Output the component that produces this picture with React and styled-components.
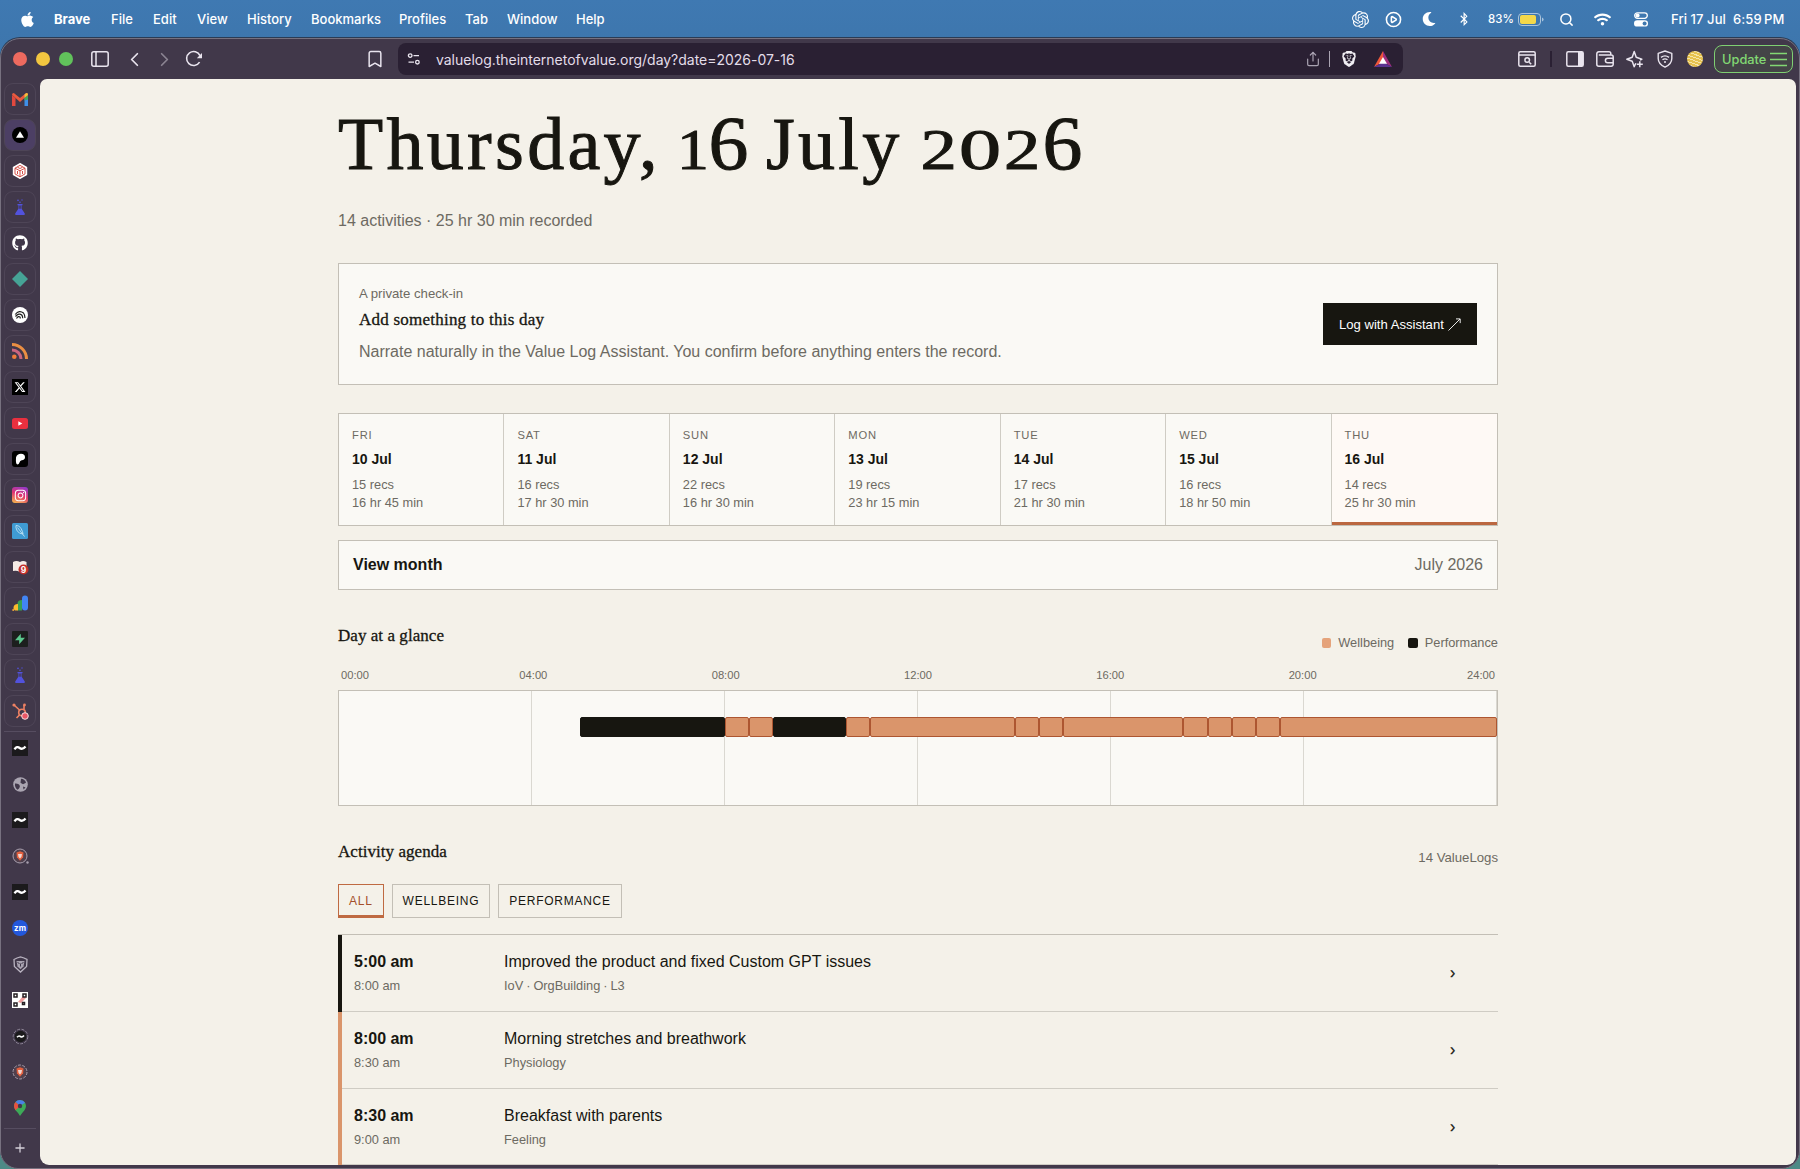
import React, { useState } from "react";
import styled, { createGlobalStyle } from "styled-components";
import {
  Bookmark,
  ChevronLeft,
  ChevronRight,
  CirclePlay,
  Plus,
  Search,
  Share
} from "lucide-react";
import {
  FaApple,
  FaBluetoothB,
  FaGithub,
  FaInstagram,
  FaMoon,
  FaWifi
} from "react-icons/fa";
import { FaXTwitter } from "react-icons/fa6";
import { SiBrave, SiOpenai } from "react-icons/si";

const SANS = `"Liberation Sans", Arial, sans-serif`;
const SERIF = `"Liberation Serif", "Times New Roman", serif`;
const SYSTEM = `Inter, "Liberation Sans", sans-serif`;

const menus = [
  ["Brave", 57],
  ["File", 42],
  ["Edit", 44],
  ["View", 50],
  ["History", 64],
  ["Bookmarks", 88],
  ["Profiles", 66],
  ["Tab", 42],
  ["Window", 69],
  ["Help", 40]
];

const week = [
  { name: "Fri", date: "10 Jul", recs: 15, total: "16 hr 45 min" },
  { name: "Sat", date: "11 Jul", recs: 16, total: "17 hr 30 min" },
  { name: "Sun", date: "12 Jul", recs: 22, total: "16 hr 30 min" },
  { name: "Mon", date: "13 Jul", recs: 19, total: "23 hr 15 min" },
  { name: "Tue", date: "14 Jul", recs: 17, total: "21 hr 30 min" },
  { name: "Wed", date: "15 Jul", recs: 16, total: "18 hr 50 min" },
  { name: "Thu", date: "16 Jul", recs: 14, total: "25 hr 30 min" }
];

const hours = ["00:00", "04:00", "08:00", "12:00", "16:00", "20:00", "24:00"];

// [kind, start hour, end hour]
const blocks = [
  ["performance", 5, 8],
  ["wellbeing", 8, 8.5],
  ["wellbeing", 8.5, 9],
  ["performance", 9, 10.5],
  ["wellbeing", 10.5, 11],
  ["wellbeing", 11, 14],
  ["wellbeing", 14, 14.5],
  ["wellbeing", 14.5, 15],
  ["wellbeing", 15, 17.5],
  ["wellbeing", 17.5, 18],
  ["wellbeing", 18, 18.5],
  ["wellbeing", 18.5, 19],
  ["wellbeing", 19, 19.5],
  ["wellbeing", 19.5, 24]
];

const agenda = [
  {
    kind: "performance",
    start: "5:00 am",
    end: "8:00 am",
    title: "Improved the product and fixed Custom GPT issues",
    tags: "IoV · OrgBuilding · L3"
  },
  {
    kind: "wellbeing",
    start: "8:00 am",
    end: "8:30 am",
    title: "Morning stretches and breathwork",
    tags: "Physiology"
  },
  {
    kind: "wellbeing",
    start: "8:30 am",
    end: "9:00 am",
    title: "Breakfast with parents",
    tags: "Feeling"
  }
];

const firstHour = blocks[0][1];

const GlobalStyle = createGlobalStyle`
  * {
    box-sizing: border-box;
  }
  body {
    margin: 0;
    overflow: hidden;
    font-family: ${SANS};
    color: #171610;
  }
  h1, h2, p {
    margin: 0;
    font-weight: 400;
  }
  svg {
    display: block;
    flex: none;
  }
  button {
    font: inherit;
    color: inherit;
    background: none;
    border: 0;
    padding: 0;
  }
`;

const Desktop = styled.div`
  width: 1800px;
  height: 1169px;
  display: flex;
  flex-direction: column;
  overflow: hidden;
  background: linear-gradient(#3f79b2 0, #3d75ab 60px, #4d8a86 900px);
`;

const MenuBar = styled.header`
  display: flex;
  align-items: center;
  flex: none;
  height: 38px;
  padding-left: 19px;
  color: #fff;
  font: 500 13px ${SYSTEM};
`;

const Menu = styled.span`
  width: ${props => props.$w}px;
  font-weight: ${props => (props.$bold ? 700 : 500)};
`;

const AppleSlot = styled.span`
  width: 35px;
`;

const Status = styled.div`
  display: flex;
  align-items: center;
  margin-left: auto;
  width: 455px;
`;

const Slot = styled.span`
  display: flex;
  align-items: center;
  justify-content: center;
  flex: none;
  width: ${props => props.$w || 30}px;
  color: ${props => props.$color || "inherit"};
`;

const Battery = styled.span`
  display: flex;
  align-items: center;
  gap: 4px;
  width: 66px;
  padding-left: 6px;
  font-size: 11.5px;
`;

const Clock = styled.span`
  padding-left: 9px;
  font-size: 13px;
  letter-spacing: 0.08px;
  white-space: pre;
`;

const Window = styled.div`
  flex: 1;
  min-height: 0;
  display: flex;
  flex-direction: column;
  padding: 0 3px 3px 0;
  border: 1px solid #77717f;
  border-radius: 20px 20px 18px 18px;
  box-shadow: 0 -1px 0 #2b3c55;
  background: #41384a;
  overflow: hidden;
`;

const Toolbar = styled.div`
  display: flex;
  align-items: center;
  flex: none;
  height: 40px;
  padding-left: 12px;
  margin-right: -3px;
  color: #e9e4ee;
`;

const Lights = styled.div`
  display: flex;
  gap: 9px;
  width: 70px;
`;

const Light = styled.span`
  width: 14px;
  height: 14px;
  border-radius: 50%;
  background: ${props => props.$color};
`;

const BookmarkSlot = styled(Slot)`
  margin-left: 141px;
`;

const AddressBar = styled.div`
  display: flex;
  align-items: center;
  width: 1005px;
  height: 32px;
  border-radius: 8px;
  background: #2a2033;
`;

const Url = styled.span`
  flex: 1;
  padding-left: 6px;
  font: 400 14px ${SYSTEM};
  letter-spacing: -0.02px;
  color: #e3dde9;
`;

const Divider = styled.span`
  width: ${props => props.$thick || 1}px;
  height: 16px;
  background: ${props => props.$color};
`;

const Tools = styled.div`
  display: flex;
  align-items: center;
  margin-left: 109px;
`;

const Avatar = styled.span`
  width: 16px;
  height: 16px;
  border-radius: 50%;
  background: repeating-linear-gradient(
    20deg,
    #e6c24e 0,
    #e6c24e 2px,
    #f6e6a8 2px,
    #f6e6a8 3px
  );
`;

const Update = styled.button`
  display: flex;
  align-items: center;
  gap: 4px;
  width: 79px;
  height: 28px;
  margin-left: 4px;
  padding-left: 7px;
  border: 1px solid #7fcf72;
  border-radius: 8px;
  background: #444447;
  color: #82d873;
  font: 500 12.8px ${SYSTEM};
`;

const Body = styled.div`
  flex: 1;
  min-height: 0;
  display: flex;
`;

const Tabs = styled.nav`
  flex: none;
  display: flex;
  flex-direction: column;
  align-items: center;
  gap: 4px;
  width: 39px;
  padding: 4px 1px 0 0;
`;

const Tab = styled.span`
  display: flex;
  align-items: center;
  justify-content: center;
  flex: none;
  width: 32px;
  height: 32px;
  border: 1px solid ${props => (props.$pinned ? "#4e4557" : "transparent")};
  border-radius: 9px;
  background: ${props => (props.$active ? "#4c3f64" : "transparent")};
`;

const TabLine = styled.span`
  flex: none;
  width: 32px;
  height: 1px;
  margin: ${props => props.$margin};
  background: #564d60;
`;

const Page = styled.main`
  flex: 1;
  min-width: 0;
  padding: 24px 298px 0;
  border-radius: 7px 7px 9px 9px;
  background: #f4f1e9;
  overflow: hidden;
`;

const Title = styled.h1`
  height: 82px;
  font-family: ${SERIF};
  font-size: 74px;
  line-height: 82px;
  letter-spacing: 3.3px;
  word-spacing: -4.8px;
  white-space: nowrap;
  -webkit-text-stroke: 1px #171610;
`;

// Old-style numerals: 0, 1 and 2 stay low, 6 rises above them.
const Numeral = styled.span`
  display: inline-flex;
  justify-content: center;
  width: ${props => props.$w}px;
  font-size: ${props => (props.$tall ? 76 : 58)}px;
  line-height: 1;
  letter-spacing: 0;
  transform: scaleX(${props => (props.$tall ? 1.05 : props.$stretch)});
`;

const Summary = styled.p`
  margin-top: 26px;
  font-size: 16px;
  line-height: 20px;
  color: #6d6a62;
`;

const CheckIn = styled.section`
  display: flex;
  align-items: center;
  justify-content: space-between;
  height: 122px;
  margin-top: 32px;
  padding: 0 20px;
  border: 1px solid #c3bfb6;
  background: #faf9f5;
`;

const Kicker = styled.p`
  font-size: 13.2px;
  line-height: 16px;
  color: #6d6a62;
`;

const Heading = styled.h2`
  font: 400 17px/20px ${SERIF};
  letter-spacing: ${props => props.$spacing || 0.05}px;
  -webkit-text-stroke: 0.3px #171610;
`;

const CheckInHeading = styled(Heading)`
  margin: 8px 0 12px;
`;

const Hint = styled.p`
  font-size: 16px;
  line-height: 20px;
  color: #6d6a62;
`;

const LogButton = styled.button`
  display: flex;
  align-items: center;
  gap: 4px;
  width: 154px;
  height: 42px;
  padding-left: 16px;
  background: #171610;
  color: #fff;
  font-size: 13.1px;
  white-space: nowrap;
`;

const Week = styled.div`
  display: grid;
  grid-template-columns: repeat(7, 1fr);
  height: 113px;
  margin-top: 28px;
  border: 1px solid #c3bfb6;
  background: #faf9f5;
`;

const Day = styled.div`
  padding: 14px 0 0 13px;
  border-right: 1px solid #cfccc4;
  font-size: 12.8px;
  line-height: 18.4px;
  color: #6d6a62;

  &:last-child {
    border-right: 0;
    background: #fef9f5;
    box-shadow: inset 0 -3px 0 #bb6740;
  }
`;

const DayName = styled.div`
  font-size: 11.2px;
  line-height: 14px;
  letter-spacing: 0.8px;
  text-transform: uppercase;
`;

const DayDate = styled.div`
  margin: 8px 0;
  font-size: 14px;
  font-weight: 700;
  line-height: 18px;
  color: #171610;
`;

const MonthToggle = styled.div`
  display: flex;
  align-items: center;
  justify-content: space-between;
  height: 50px;
  margin-top: 14px;
  padding: 0 14px;
  border: 1px solid #c3bfb6;
  background: #faf9f5;
  font-size: 16px;
  line-height: 20px;

  span {
    color: #6d6a62;
  }
`;

const SectionHead = styled.div`
  display: flex;
  justify-content: space-between;
  height: 26px;
  margin: 36px 0 16px;
`;

const Legend = styled.div`
  display: flex;
  align-items: center;
  align-self: flex-end;
  gap: 14px;
  font-size: 12.8px;
  line-height: 18px;
  color: #6d6a62;
`;

const LegendItem = styled.span`
  display: flex;
  align-items: center;
  gap: 7px;

  &::before {
    content: "";
    width: 9.5px;
    height: 9.5px;
    border-radius: 2px;
    background: ${props => props.$color};
  }
`;

const Count = styled.span`
  align-self: flex-end;
  font-size: 13.2px;
  line-height: 20px;
  color: #6d6a62;
`;

const Axis = styled.div`
  display: flex;
  justify-content: space-between;
  padding: 0 3px;
  font-size: 11.2px;
  line-height: 14px;
  color: #6d6a62;
`;

const Tick = styled.span`
  display: flex;
  justify-content: center;
  width: 0;

  &:first-child {
    justify-content: flex-start;
  }
  &:last-child {
    justify-content: flex-end;
  }
`;

const Track = styled.div`
  display: grid;
  grid-template-columns: repeat(6, 1fr);
  height: 116px;
  margin-top: 8px;
  border: 1px solid #c3bfb6;
  background: #faf9f5;
`;

const TrackCell = styled.div`
  grid-row: 1;
  border-right: 1px solid #dad8d1;
`;

const Blocks = styled.div`
  display: flex;
  grid-row: 1;
  grid-column: 1 / -1;
  height: 20px;
  margin-top: 26px;
`;

const Block = styled.span`
  flex: none;
  border: 1px solid ${props => (props.$kind === "wellbeing" ? "#ad5631" : "#171610")};
  border-radius: 2px;
  background: ${props => (props.$kind === "wellbeing" ? "#da956b" : "#171610")};
`;

const Filters = styled.div`
  display: flex;
  gap: 8px;
`;

const Filter = styled.button`
  height: 34px;
  padding: 0 10px;
  border: 1px solid ${props => (props.$active ? "#bf6a42" : "#c3bfb6")};
  box-shadow: ${props => (props.$active ? "inset 0 -2px 0 #bf6a42" : "none")};
  color: ${props => (props.$active ? "#a34f2b" : "#171610")};
  font-size: 12px;
  letter-spacing: 0.74px;
  text-transform: uppercase;
`;

const Agenda = styled.div`
  margin-top: 16px;
  border-top: 1px solid #c3bfb6;
`;

const Entry = styled.div`
  display: grid;
  grid-template-columns: 150px 1fr 48px;
  height: 76.8px;
  padding: 17.4px 0 0 12px;
  border-left: 4px solid ${props => (props.$kind === "wellbeing" ? "#da956b" : "#171610")};
  box-shadow: inset 0 -1px 0 #cfccc4;
  font-size: 16px;
  line-height: 20px;
`;

const Sub = styled.div`
  margin-top: 5px;
  font-size: 12.8px;
  line-height: 18px;
  color: #6d6a62;
`;

const Tags = styled(Sub)`
  word-spacing: -0.6px;
`;

const Chevron = styled.span`
  padding-top: 11px;
  font-size: 16px;
  -webkit-text-stroke: 0.3px #171610;
`;

const BatteryIcon = () => (
  <svg width="26" height="13" viewBox="0 0 26 13">
    <rect x="0.5" y="0.5" width="22" height="12" rx="3.5" fill="none" stroke="#a9c3dc" />
    <rect x="2" y="2" width="16" height="9" rx="2" fill="#f4d84a" />
    <path d="M24 4.5v4q1.6-.6 1.6-2t-1.6-2z" fill="#a9c3dc" />
  </svg>
);

const ControlIcon = () => (
  <svg width="14" height="15" viewBox="0 0 14 15">
    <rect x="0.7" y="0.9" width="12.6" height="5.4" rx="2.7" fill="none" stroke="#fff" strokeWidth="1.3" />
    <circle cx="3.6" cy="3.6" r="2" fill="#fff" />
    <rect x="0" y="8.2" width="14" height="6.4" rx="3.2" fill="#fff" />
    <circle cx="10.6" cy="11.4" r="2" fill="#3f78af" />
  </svg>
);

const SidebarIcon = () => (
  <svg width="18" height="16" viewBox="0 0 18 16" fill="none" stroke="currentColor" strokeWidth="1.5">
    <rect x="0.8" y="0.8" width="16.4" height="14.4" rx="2" />
    <path d="M5 1v14" />
  </svg>
);

const ReloadIcon = () => (
  <svg width="18" height="18" viewBox="0 0 18 18" fill="none" stroke="currentColor" strokeWidth="1.6">
    <path d="M14.6 12.2A7 7 0 1 1 15 5.6" />
    <path d="M17 3v5.2h-5.2z" fill="currentColor" stroke="none" />
  </svg>
);

const TuneIcon = () => (
  <svg width="14" height="14" viewBox="0 0 14 14" fill="none" stroke="currentColor" strokeWidth="1.3">
    <circle cx="3.2" cy="3.6" r="1.8" />
    <path d="M6.5 3.6H12M1.5 10.2H7" />
    <circle cx="10.4" cy="10.2" r="1.8" />
  </svg>
);

const BatIcon = () => (
  <svg width="18" height="16" viewBox="0 0 18 16">
    <path d="M9 0 0 16l9-5z" fill="#f0563a" />
    <path d="M9 0l9 16-9-5z" fill="#9e2e7c" />
    <path d="M0 16h18l-9-5z" fill="#5b3390" />
    <path d="M9 6l4 6.8H5z" fill="#fff" />
  </svg>
);

const FindWindowIcon = () => (
  <svg width="18" height="16" viewBox="0 0 18 16" fill="none" stroke="currentColor" strokeWidth="1.5">
    <rect x="0.8" y="0.8" width="16.4" height="14.4" rx="1.5" />
    <path d="M1 4h16M11.2 11.2l2 2" />
    <circle cx="9.2" cy="9" r="2.3" />
  </svg>
);

const PanelIcon = () => (
  <svg width="18" height="16" viewBox="0 0 18 16">
    <rect x="0.8" y="0.8" width="16.4" height="14.4" rx="1.5" fill="none" stroke="currentColor" strokeWidth="1.5" />
    <path d="M12 1h5v14h-5z" fill="currentColor" />
  </svg>
);

const WalletIcon = () => (
  <svg width="18" height="16" viewBox="0 0 18 16" fill="none" stroke="currentColor" strokeWidth="1.5">
    <path d="M14.8 4V2.6A1.8 1.8 0 0 0 13 .8H2.8a2 2 0 0 0-2 2v10.4a2 2 0 0 0 2 2h12.4a2 2 0 0 0 2-2V6a2 2 0 0 0-2-2H2.8" />
    <path d="M17 7.2h-5.3a2.3 2.3 0 0 0 0 4.6H17" />
  </svg>
);

const SparkleIcon = () => (
  <svg width="18" height="18" viewBox="0 0 18 18" fill="none" stroke="currentColor" strokeWidth="1.5" strokeLinejoin="round">
    <path d="M9.8 13.2 8.2 16.8 6.2 11.2.8 9.2l5.4-2L8.2 1.4l2 5.8 5.6 2-1.8.8" />
    <path d="M13.8 11.2v6M10.8 14.2h6" />
  </svg>
);

const VpnIcon = () => (
  <svg width="16" height="18" viewBox="0 0 16 18" fill="none" stroke="currentColor" strokeWidth="1.4" strokeLinejoin="round">
    <path d="M8 1l6.8 2.3v5.2q0 5.5-6.8 8.7Q1.2 14 1.2 8.5V3.3z" />
    <path d="M4 7.4q4-3 8 0M5.5 9.8q2.5-1.8 5 0" />
    <circle cx="8" cy="12" r="1" fill="currentColor" stroke="none" />
  </svg>
);

const BurgerIcon = () => (
  <svg width="17" height="15" viewBox="0 0 17 15" stroke="currentColor" strokeWidth="1.3">
    <path d="M0 1.5h17M0 7.5h17M0 13.5h17" />
  </svg>
);

const ArrowIcon = () => (
  <svg width="13" height="13" viewBox="0 0 13 13" fill="none" stroke="#fff" strokeWidth="0.9">
    <path d="M.5 12.5 12 1M8 .9h4.2v4.2" />
  </svg>
);

const GmailIcon = () => (
  <svg width="16" height="13" viewBox="0 0 16 13">
    <path d="M0 2v11h3.5V5z" fill="#e2493f" />
    <path d="M12.5 5v8H16V2z" fill="#3f8fe8" />
    <path d="M12.5 4.5 16 2v4.5l-3.5 1z" fill="#43a85a" />
    <path d="M0 1.8Q0 0 1.8 0L8 5l6.2-5Q16 0 16 1.8L8 9z" fill="#ea5a3e" />
    <path d="M12.5 1.4Q16-1.5 16 2l-3.5 2.8z" fill="#f5bd3c" />
  </svg>
);

const TriangleIcon = () => (
  <svg width="16" height="16" viewBox="0 0 16 16">
    <circle cx="8" cy="8" r="8" fill="#000" />
    <path d="M8 4.2l4 6.6H4z" fill="#fff" />
  </svg>
);

const DiceIcon = () => (
  <svg width="16" height="16" viewBox="0 0 16 16" fill="#fff" stroke="#d5524b">
    <path d="M8 .7l6.5 3.6v7.4L8 15.3l-6.5-3.6V4.3z" stroke="#fff" strokeWidth="1.4" />
    <path d="M8 2.3l5 2.9v5.7l-5 2.9-5-2.9V5.2zM3 5.2l5 2.6 5-2.6M8 7.8v6" />
    <path d="M5.5 4.3 8 5.5l2.5-1.2M5.5 8v3M10.5 8v3" />
  </svg>
);

const FlaskIcon = () => (
  <svg width="12" height="16" viewBox="0 0 12 16" fill="#5252dc">
    <path d="M3.5 5h5v1.2h-1v3.2l3.3 5.1q.4 1.5-.9 1.5H2.1q-1.3 0-.9-1.5l3.3-5.1V6.2h-1z" />
    <circle cx="4" cy="1.4" r="0.8" />
    <circle cx="8" cy="1" r="0.7" />
    <circle cx="6" cy="3.2" r="0.8" />
    <path d="M5.3 6.5h1.4v3.2H5.3z" fill="#41384a" />
  </svg>
);

const DiamondIcon = () => (
  <svg width="16" height="16" viewBox="0 0 16 16">
    <path d="M8 0l8 8-8 8-8-8z" fill="#46a396" />
  </svg>
);

const ArcsIcon = () => (
  <svg width="16" height="16" viewBox="0 0 16 16" fill="none" stroke="#222" strokeWidth="1.2">
    <circle cx="8" cy="8" r="8" fill="#fff" stroke="none" />
    <path d="M3.2 7.5q4-5 8.3-1.5 1.5 2 1.5 5M3.5 9.5q3.5-4 6.2-1.5 1 1.2 1 3.2M4.5 11.5q2-3 3.6-1.3l.3 1.3" />
  </svg>
);

const RssIcon = () => (
  <svg width="16" height="16" viewBox="0 0 16 16" fill="none" strokeWidth="3">
    <path d="M0 1.5A14.5 14.5 0 0 1 14.5 16" stroke="#ea8f43" />
    <path d="M0 7a9 9 0 0 1 9 9" stroke="#c9657f" />
    <circle cx="2.3" cy="13.7" r="2.3" fill="#ef7d3a" />
  </svg>
);

const TileIcon = styled.span`
  display: flex;
  align-items: center;
  justify-content: center;
  width: 16px;
  height: 16px;
  border-radius: ${props => props.$r || 0}px;
  background: ${props => props.$bg};
  color: #fff;
  font: 700 8px ${SYSTEM};
`;

const YoutubeIcon = () => (
  <svg width="16" height="11" viewBox="0 0 16 11">
    <rect width="16" height="11" rx="2.5" fill="#e9303f" />
    <path d="M6.3 3.2v4.6l4-2.3z" fill="#fff" />
  </svg>
);

const PatreonIcon = () => (
  <svg width="16" height="16" viewBox="0 0 16 16">
    <rect width="16" height="16" rx="3" fill="#000" />
    <path d="M4 6.5Q5 2.8 9 2.8q4 .2 4 3.4 0 2.5-3.3 3-1.7.4-2.2 2.3-.6 2-2 2Q3.500 13.500 4 6.500z" fill="#fff" />
  </svg>
);

const FeatherIcon = () => (
  <svg width="16" height="16" viewBox="0 0 16 16" fill="none" stroke="#bfe3f5" strokeWidth="0.9">
    <rect width="16" height="16" rx="1.5" fill="#3f9bd3" stroke="none" />
    <path d="M4 2.5q3-.5 5 3t2 5.500q-4 0-5.800-3.200T4 2.500zM5.500 4.500l7 9" />
  </svg>
);

const BookIcon = () => (
  <svg width="17" height="16" viewBox="0 0 17 16">
    <path d="M1 3q3.5-2 7 0 3-2 6.5 0v9q-3.500-1-6.500 1-3.500-2-7-1z" fill="#f5ebe6" />
    <circle cx="11.5" cy="10.5" r="5" fill="#c42f2a" />
    <text x="11.5" y="13.6" textAnchor="middle" fontSize="8.5" fontWeight="700" fontFamily="Inter" fill="#fff">9</text>
  </svg>
);

const AdsIcon = () => (
  <svg width="16" height="16" viewBox="0 0 16 16">
    <rect x="10" y="0.5" width="6" height="15" rx="3" fill="#4285f4" />
    <path d="M5.5 15.5V8Q6 5 10 5v10.5z" fill="#37a152" />
    <path d="M1.5 14Q1 9 6 9v6.5H3z" fill="#fbbc2d" />
    <circle cx="1.2" cy="15" r="1" fill="#f3a73b" />
  </svg>
);

const BoltIcon = () => (
  <svg width="16" height="16" viewBox="0 0 16 16">
    <rect width="16" height="16" rx="1" fill="#1c1f1e" />
    <path d="M8.8 2.7v4H13l-5.800 6.600V9.200H3z" fill="#5cc98e" />
  </svg>
);

const HubIcon = () => (
  <svg width="17" height="17" viewBox="0 0 17 17">
    <g fill="none" stroke="#ee8163" strokeWidth="1.6">
      <circle cx="10" cy="9.5" r="3.3" />
      <path d="M2 2l5.5 5M12 2v4.5M7.5 12l-3 3" />
    </g>
    <circle cx="2" cy="2" r="1.6" fill="#ee8163" />
    <circle cx="12.5" cy="2" r="1.4" fill="#ee8163" />
    <circle cx="13" cy="13" r="3.3" fill="#e95766" stroke="#f4dfe0" />
  </svg>
);

const TildeIcon = () => (
  <svg width="16" height="16" viewBox="0 0 16 16">
    <rect width="16" height="16" fill="#1b1a1c" />
    <path d="M2.5 9.3Q5 5.8 7.7 8t5.8-1.5" fill="none" stroke="#fff" strokeWidth="2.3" />
  </svg>
);

const GlobeIcon = () => (
  <svg width="15" height="15" viewBox="0 0 15 15">
    <circle cx="7.5" cy="7.5" r="7.3" fill="#aaa5b1" />
    <path d="M2 6.5q3.5-.3 4.5 1.5T6 11.500l-1.500 1.200Q1.500 10.500 2 6.500zM8 1.800q4 .3 5 4l-3 1.500-2.500-1.600zM10 9.500l2.500 1-2 2z" fill="#41384a" />
  </svg>
);

const RoundLion = ({ dashed }) => (
  <svg width="17" height="17" viewBox="0 0 17 17">
    <circle cx="8" cy="8" r="7" fill="#51404d" stroke="#a79fae" strokeDasharray={dashed ? "3 1.4" : "none"} />
    <path d="M4.5 4.5 8 3.3l3.5 1.2-.4 4.8L8 12.8 4.9 9.3z" fill="#e3603f" />
    <path d="M6 6h4l-.6 3L8 10.5 6.6 9z" fill="#f2d6cf" />
    {!dashed && <circle cx="15.5" cy="14.5" r="1.2" fill="#a79fae" />}
  </svg>
);

const RoundTilde = () => (
  <svg width="17" height="17" viewBox="0 0 17 17" fill="none">
    <circle cx="8.5" cy="8.5" r="7.3" stroke="#8d8596" strokeDasharray="3 1.4" />
    <circle cx="8.5" cy="8.5" r="5.8" fill="#1b1a1c" />
    <path d="M5 9.2q1.8-2 3.500-.7t3.500-.9" stroke="#fff" strokeWidth="1.6" />
  </svg>
);

const ShieldLion = () => (
  <svg width="15" height="17" viewBox="0 0 15 17" fill="none" stroke="#b9b3c0">
    <path d="M1 3.5 4 2l3.5-1L11 2l3 1.5-.4 7L7.5 16l-6.1-5.5z" strokeWidth="1.3" />
    <path d="M3.5 5h8l-1 5.5-3 2.7-3-2.7z" fill="#a8a2b0" stroke="none" />
    <path d="M4.5 6.5l2 1M10.5 6.5l-2 1M7.5 7.5v3" stroke="#41384a" />
  </svg>
);

const QrIcon = () => (
  <svg width="16" height="16" viewBox="0 0 16 16">
    <rect width="16" height="16" fill="#fff" />
    <path d="M6 10 11 4l3 2-5 5z" fill="#ef9c9c" />
    <g fill="none" stroke="#262024" strokeWidth="1.5">
      <path d="M2 2h3v3H2zM11 2h3v3h-3zM2 11h3v3H2zM10.5 10.5h2v2h-2z" />
    </g>
  </svg>
);

const MapsIcon = () => (
  <svg width="12" height="16" viewBox="0 0 12 16">
    <path d="M6 0a6 6 0 0 1 6 6q0 2-1.5 4.2Q7.500 13.500 6 16 4.500 13 1.500 10.200 0 8 0 6a6 6 0 0 1 6-6z" fill="#3daa58" />
    <path d="M6 6 1.5 2Q3 0 6 0q3.5 0 5 2.7z" fill="#4a80e8" />
    <path d="M6 6 1.5 10.2Q0 8 0 6q0-2.5 1.5-4z" fill="#e8503f" />
    <circle cx="6" cy="6" r="2.2" fill="#41384a" />
  </svg>
);

const pinned = [
  <GmailIcon />,
  <TriangleIcon />,
  <DiceIcon />,
  <FlaskIcon />,
  <FaGithub size={16} color="#fff" />,
  <DiamondIcon />,
  <ArcsIcon />,
  <RssIcon />,
  <TileIcon $bg="#000">
    <FaXTwitter size={12} />
  </TileIcon>,
  <YoutubeIcon />,
  <PatreonIcon />,
  <TileIcon $bg="linear-gradient(200deg, #8a3ad8, #e0356f 50%, #f8c04c)" $r={3}>
    <FaInstagram size={13} />
  </TileIcon>,
  <FeatherIcon />,
  <BookIcon />,
  <AdsIcon />,
  <BoltIcon />,
  <FlaskIcon />,
  <HubIcon />
];

const open = [
  <TildeIcon />,
  <GlobeIcon />,
  <TildeIcon />,
  <RoundLion />,
  <TildeIcon />,
  <TileIcon $bg="#2358dc" $r={8}>
    zm
  </TileIcon>,
  <ShieldLion />,
  <QrIcon />,
  <RoundTilde />,
  <RoundLion dashed />,
  <MapsIcon />
];

export default function App() {
  const [filter, setFilter] = useState("All");

  return (
    <Desktop>
      <GlobalStyle />
      <MenuBar>
        <AppleSlot>
          <FaApple size={17} />
        </AppleSlot>
        {menus.map(([name, width], index) => (
          <Menu key={name} $w={width} $bold={index === 0}>
            {name}
          </Menu>
        ))}
        <Status>
          <Slot>
            <SiOpenai size={17} />
          </Slot>
          <Slot $w={36}>
            <CirclePlay size={17} strokeWidth={2.2} />
          </Slot>
          <Slot $w={35}>
            <FaMoon size={14} />
          </Slot>
          <Slot $w={36}>
            <FaBluetoothB size={14} />
          </Slot>
          <Battery>
            83%
            <BatteryIcon />
          </Battery>
          <Slot $w={37}>
            <Search size={15} strokeWidth={2.4} />
          </Slot>
          <Slot $w={34}>
            <FaWifi size={17} />
          </Slot>
          <Slot $w={43}>
            <ControlIcon />
          </Slot>
          <Clock>{"Fri 17 Jul  6:59\u2009PM"}</Clock>
        </Status>
      </MenuBar>

      <Window>
        <Toolbar>
          <Lights>
            <Light $color="#ed6a5f" />
            <Light $color="#f2c640" />
            <Light $color="#61c25b" />
          </Lights>
          <Slot $w={34}>
            <SidebarIcon />
          </Slot>
          <Slot $w={34}>
            <ChevronLeft size={23} strokeWidth={1.8} />
          </Slot>
          <Slot $w={26} $color="#8b8492">
            <ChevronRight size={23} strokeWidth={1.8} />
          </Slot>
          <Slot $w={34}>
            <ReloadIcon />
          </Slot>
          <BookmarkSlot $w={46}>
            <Bookmark size={20} strokeWidth={1.8} />
          </BookmarkSlot>
          <AddressBar>
            <Slot $w={32}>
              <TuneIcon />
            </Slot>
            <Url>valuelog.theinternetofvalue.org/day?date=2026-07-16</Url>
            <Slot $w={32} $color="#a9a2b1">
              <Share size={16} strokeWidth={1.8} />
            </Slot>
            <Divider $color="#aaa4b2" />
            <Slot $w={38} $color="#f0edf3">
              <SiBrave size={16} />
            </Slot>
            <Slot $w={29}>
              <BatIcon />
            </Slot>
            <Slot $w={6} />
          </AddressBar>
          <Tools>
            <Slot>
              <FindWindowIcon />
            </Slot>
            <Slot $w={18}>
              <Divider $color="#2a2033" $thick={2} />
            </Slot>
            <Slot>
              <PanelIcon />
            </Slot>
            <Slot>
              <WalletIcon />
            </Slot>
            <Slot>
              <SparkleIcon />
            </Slot>
            <Slot>
              <VpnIcon />
            </Slot>
            <Slot>
              <Avatar />
            </Slot>
            <Update>
              Update
              <BurgerIcon />
            </Update>
          </Tools>
        </Toolbar>

        <Body>
          <Tabs>
            {pinned.map((icon, index) => (
              <Tab key={index} $pinned $active={index === 1}>
                {icon}
              </Tab>
            ))}
            <TabLine $margin="0 0 -4px" />
            {open.map((icon, index) => (
              <Tab key={index}>{icon}</Tab>
            ))}
            <TabLine $margin="0 0 -1px" />
            <Tab>
              <Plus size={14} strokeWidth={2.2} color="#d4cfd9" />
            </Tab>
          </Tabs>

          <Page>
            <Title>
              Thursday,{" "}
              <Numeral $w={30} $stretch={1.1}>1</Numeral>
              <Numeral $w={41} $tall>6</Numeral> July{" "}
              <Numeral $w={39} $stretch={1.25}>2</Numeral>
              <Numeral $w={44} $stretch={1.45}>0</Numeral>
              <Numeral $w={40} $stretch={1.25}>2</Numeral>
              <Numeral $w={41} $tall>6</Numeral>
            </Title>
            <Summary>14 activities · 25 hr 30 min recorded</Summary>

            <CheckIn>
              <div>
                <Kicker>A private check-in</Kicker>
                <CheckInHeading $spacing={0.23}>
                  Add something to this day
                </CheckInHeading>
                <Hint>
                  Narrate naturally in the Value Log Assistant. You confirm
                  before anything enters the record.
                </Hint>
              </div>
              <LogButton>
                Log with Assistant
                <ArrowIcon />
              </LogButton>
            </CheckIn>

            <Week>
              {week.map(day => (
                <Day key={day.date}>
                  <DayName>{day.name}</DayName>
                  <DayDate>{day.date}</DayDate>
                  <div>{day.recs} recs</div>
                  <div>{day.total}</div>
                </Day>
              ))}
            </Week>

            <MonthToggle>
              <strong>View month</strong>
              <span>July 2026</span>
            </MonthToggle>

            <SectionHead>
              <Heading>Day at a glance</Heading>
              <Legend>
                <LegendItem $color="#e5a37b">Wellbeing</LegendItem>
                <LegendItem $color="#171610">Performance</LegendItem>
              </Legend>
            </SectionHead>
            <Axis>
              {hours.map(hour => (
                <Tick key={hour}>{hour}</Tick>
              ))}
            </Axis>
            <Track>
              {hours.slice(1).map((hour, index) => (
                <TrackCell key={hour} style={{ gridColumn: index + 1 }} />
              ))}
              <Blocks style={{ paddingLeft: `${(firstHour / 24) * 100}%` }}>
                {blocks.map(([kind, start, end]) => (
                  <Block
                    key={start}
                    $kind={kind}
                    style={{
                      width: `${((end - start) / (24 - firstHour)) * 100}%`
                    }}
                  />
                ))}
              </Blocks>
            </Track>

            <SectionHead>
              <Heading>Activity agenda</Heading>
              <Count>14 ValueLogs</Count>
            </SectionHead>
            <Filters>
              {["All", "Wellbeing", "Performance"].map(name => (
                <Filter
                  key={name}
                  $active={name === filter}
                  onClick={() => setFilter(name)}
                >
                  {name}
                </Filter>
              ))}
            </Filters>

            <Agenda>
              {agenda
                .filter(
                  item => filter === "All" || item.kind === filter.toLowerCase()
                )
                .map(item => (
                  <Entry key={item.start} $kind={item.kind}>
                    <div>
                      <strong>{item.start}</strong>
                      <Sub>{item.end}</Sub>
                    </div>
                    <div>
                      {item.title}
                      <Tags>{item.tags}</Tags>
                    </div>
                    <Chevron>›</Chevron>
                  </Entry>
                ))}
            </Agenda>
          </Page>
        </Body>
      </Window>
    </Desktop>
  );
}
